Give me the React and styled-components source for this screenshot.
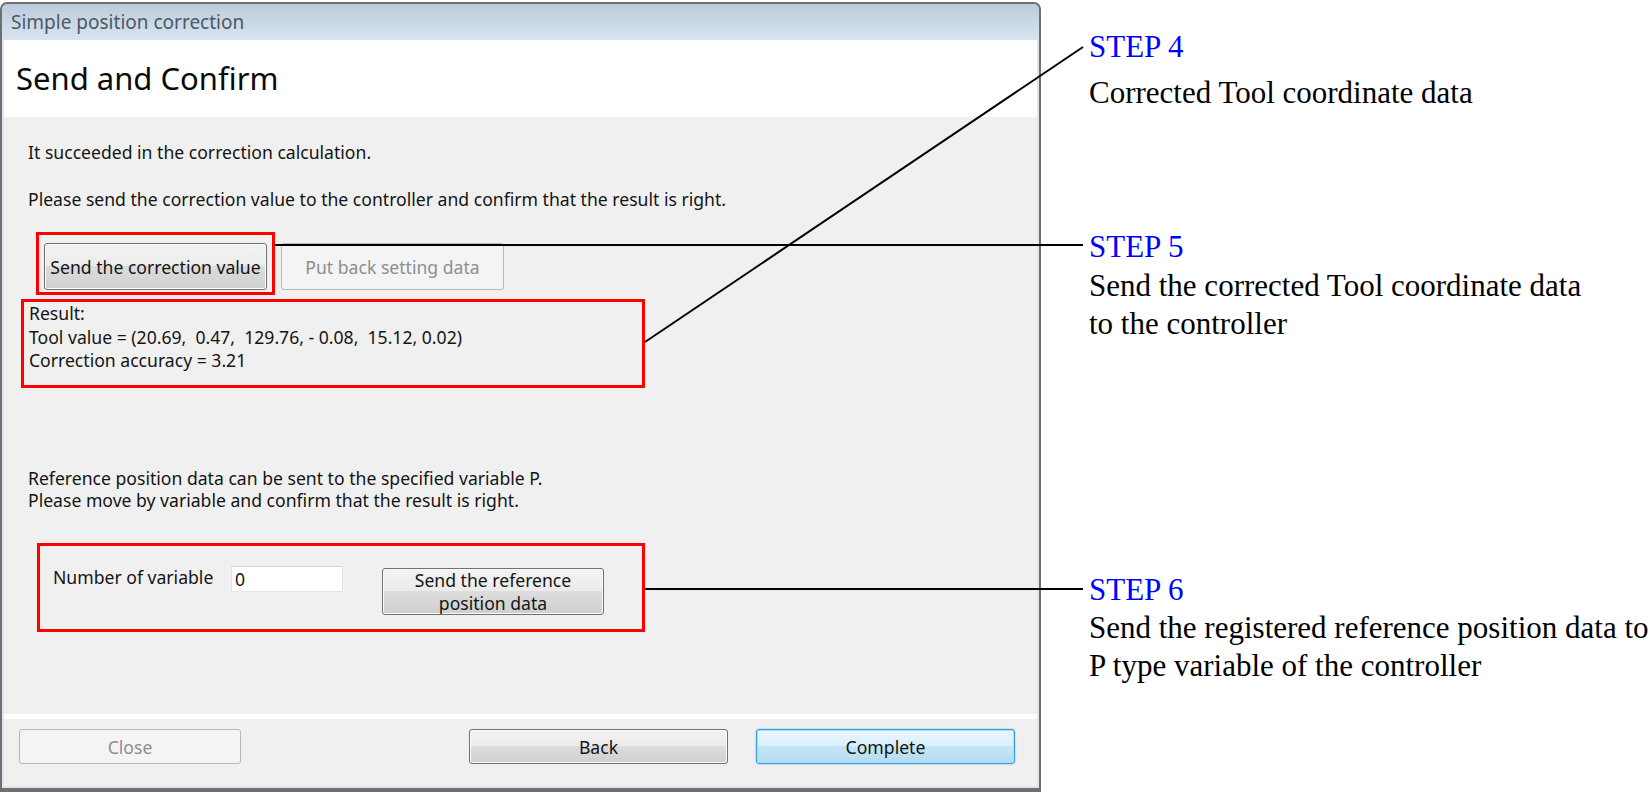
import React from "react";
import styled, { createGlobalStyle, css } from "styled-components";

const GlobalStyle = createGlobalStyle`
  html, body {
    margin: 0;
    padding: 0;
    background: #ffffff;
  }
`;

const Page = styled.div`
  position: relative;
  width: 1652px;
  height: 792px;
  overflow: hidden;
  display: flex;
  align-items: flex-start;
  background: #ffffff;
`;

/* ---------- dialog frame ---------- */

const Window = styled.div`
  box-sizing: border-box;
  flex: none;
  width: 1041px;
  height: 790px;
  margin-top: 2px;
  border: 2px solid #6f6f6f;
  border-bottom-width: 4px;
  border-radius: 7px 7px 0 0;
  background: linear-gradient(to bottom, #bccbdb 0px, #d8e4f0 36px, #dde7f1 37px, #dde7f1 100%);
  display: flex;
  flex-direction: column;
  font-family: "Noto Sans", "Open Sans", sans-serif;
  font-size: 17.6px;
  color: #141414;
`;

const TitleBar = styled.div`
  height: 36px;
  line-height: 36px;
  padding-left: 9px;
  font-size: 19px;
  color: #4b5866;
`;

const Client = styled.div`
  flex: 1;
  margin: 0 2px 2px 2px;
  display: flex;
  flex-direction: column;
  background: #f0f0f0;
`;

const Header = styled.div`
  height: 77px;
  line-height: 77px;
  padding-left: 12px;
  background: #ffffff;
  font-size: 31px;
  color: #0a0a0a;
`;

const Body = styled.div`
  height: 597px;
  box-sizing: border-box;
  padding-left: 24px;
  display: flex;
  flex-direction: column;
  align-items: flex-start;
`;

const Para = styled.div`
  line-height: 22px;
  margin-top: ${(p) => p.top}px;
`;

const Row = styled.div`
  display: flex;
  align-items: flex-start;
  margin-top: ${(p) => p.top}px;
`;

/* red annotation frames */
const Marked = styled.div`
  box-sizing: border-box;
  border: 3px solid #ff0000;
  margin-top: ${(p) => p.top || 0}px;
  margin-left: ${(p) => p.left || 0}px;
  width: ${(p) => (p.w ? `${p.w}px` : "auto")};
  height: ${(p) => (p.h ? `${p.h}px` : "auto")};
  padding: ${(p) => p.pad};
`;

const ResultLines = styled.div`
  line-height: 23.5px;
  white-space: pre;
`;

const VarRow = styled.div`
  display: flex;
  align-items: flex-start;
`;

const VarLabel = styled.div`
  width: 178px;
  line-height: 22px;
`;

const NumberInput = styled.input`
  box-sizing: border-box;
  width: 112px;
  height: 26px;
  margin: 0;
  padding: 0 3px;
  border: 1px solid #e2e5e9;
  border-top-color: #cfd2d6;
  background: #ffffff;
  font-family: inherit;
  font-size: 17.6px;
  color: #141414;
  outline: none;
`;

/* ---------- Win7 style push buttons ---------- */

const normalButton = css`
  border: 1px solid #707070;
  background: linear-gradient(
    to bottom,
    #f3f3f3 0%,
    #ebebeb 49%,
    #dddddd 50%,
    #cfcfcf 100%
  );
  box-shadow: inset 0 0 0 1px #fbfbfb;
  color: #141414;
`;

const disabledButton = css`
  border: 1px solid #b5b9bc;
  background: #f4f4f4;
  box-shadow: none;
  color: #8e8e8e;
`;

const defaultButton = css`
  border: 1px solid #3c9fd9;
  background: linear-gradient(
    to bottom,
    #eaf6fd 0%,
    #daf0fb 49%,
    #c6e6f7 50%,
    #b4dbf1 100%
  );
  box-shadow: inset 0 0 0 1px #a9dcf6, 0 0 2px #62b8ea;
  color: #141414;
`;

const Button = styled.button`
  box-sizing: border-box;
  flex: none;
  width: ${(p) => p.w}px;
  height: ${(p) => p.h}px;
  margin: ${(p) => p.m || "0"};
  padding: 0;
  border-radius: 3px;
  font-family: inherit;
  font-size: 17.6px;
  line-height: ${(p) => (p.lh ? p.lh : 22)}px;
  text-align: center;
  ${(p) => (p.variant === "disabled" ? disabledButton : p.variant === "default" ? defaultButton : normalButton)}
`;

const Footer = styled.div`
  flex: 1;
  border-top: 5px solid #ffffff;
  padding: 10px 22px 0 15px;
  display: flex;
  align-items: flex-start;
  justify-content: space-between;
`;

const FooterGroup = styled.div`
  display: flex;
  gap: 28px;
`;

/* ---------- callouts on the right ---------- */

const Notes = styled.div`
  flex: 1;
  padding: 28px 0 0 48px;
  display: flex;
  flex-direction: column;
  font-family: "Liberation Serif", "Times New Roman", serif;
  font-size: 31px;
  line-height: 38px;
  color: #000000;
  white-space: nowrap;
`;

const Step = styled.div`
  margin-top: ${(p) => p.top || 0}px;
  color: #0000ff;
`;

const StepText = styled.div`
  margin-top: ${(p) => p.top || 0}px;
`;

const Leaders = styled.svg`
  position: absolute;
  left: 0;
  top: 0;
  pointer-events: none;
`;

export default function App() {
  return (
    <>
      <GlobalStyle />
      <Page>
        <Window>
          <TitleBar>Simple position correction</TitleBar>
          <Client>
            <Header>Send and Confirm</Header>
            <Body>
              <Para top={24}>It succeeded in the correction calculation.</Para>
              <Para top={25}>
                Please send the correction value to the controller and confirm that the result is right.
              </Para>

              <Row top={22}>
                <Marked left={8} pad="8px 5px 2px 5px">
                  <Button w={223} h={47}>
                    Send the correction value
                  </Button>
                </Marked>
                <Button w={223} h={47} m="11px 0 0 6px" variant="disabled" disabled>
                  Put back setting data
                </Button>
              </Row>

              <Marked top={4} left={-7} w={624} h={89} pad="0 5px">
                <ResultLines>
                  {"Result:\nTool value = (20.69,  0.47,  129.76, - 0.08,  15.12, 0.02)\nCorrection accuracy = 3.21"}
                </ResultLines>
              </Marked>

              <Para top={79}>
                Reference position data can be sent to the specified variable P.
                <br />
                Please move by variable and confirm that the result is right.
              </Para>

              <Marked top={32} left={9} w={608} h={89} pad="20px 0 0 13px">
                <VarRow>
                  <VarLabel>Number of variable</VarLabel>
                  <NumberInput defaultValue="0" />
                  <Button w={222} h={47} lh={22.5} m="2px 0 0 39px">
                    Send the reference
                    <br />
                    position data
                  </Button>
                </VarRow>
              </Marked>
            </Body>

            <Footer>
              <Button w={222} h={35} variant="disabled" disabled>
                Close
              </Button>
              <FooterGroup>
                <Button w={259} h={35}>
                  Back
                </Button>
                <Button w={259} h={35} variant="default">
                  Complete
                </Button>
              </FooterGroup>
            </Footer>
          </Client>
        </Window>

        <Notes>
          <Step>STEP 4</Step>
          <StepText top={8}>Corrected Tool coordinate data</StepText>

          <Step top={116}>STEP 5</Step>
          <StepText top={1}>Send the corrected Tool coordinate data</StepText>
          <StepText>to the controller</StepText>

          <Step top={228}>STEP 6</Step>
          <StepText>Send the registered reference position data to</StepText>
          <StepText>P type variable of the controller</StepText>
        </Notes>

        <Leaders width="1652" height="792" viewBox="0 0 1652 792">
          <g stroke="#000000" strokeWidth="2" fill="none">
            <line x1="645" y1="342" x2="1083" y2="47" />
            <line x1="275" y1="245" x2="1083" y2="245" />
            <line x1="645" y1="589" x2="1083" y2="589" />
          </g>
        </Leaders>
      </Page>
    </>
  );
}
